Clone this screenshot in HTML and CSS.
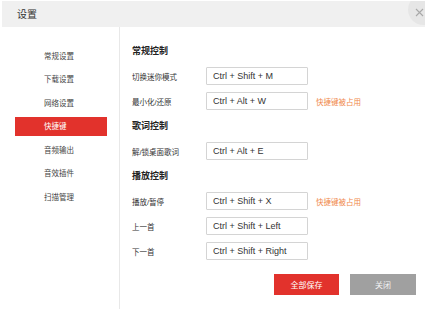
FILE: index.html
```html
<!DOCTYPE html>
<html lang="zh-CN">
<head>
    <meta charset="UTF-8">
    <meta name="viewport" content="width=device-width, initial-scale=1.0">
    <title>设置</title>
    <link rel="stylesheet" href="styles.css">
</head>
<body>

<div class="dialog">
    <div class="titlebar">
        <span class="title">设置</span>
        <div class="close">
            <svg width="9" height="9" viewBox="0 0 9 9"><path d="M1 1 L8 8 M8 1 L1 8" stroke="#a8a8a8" stroke-width="1.1" fill="none"/></svg>
        </div>
    </div>

    <div class="content">
        <ul class="sidebar">
            <li>常规设置</li>
            <li>下载设置</li>
            <li>网络设置</li>
            <li class="active">快捷键</li>
            <li>音频输出</li>
            <li>音效插件</li>
            <li>扫描管理</li>
        </ul>

        <div class="main">
            <div class="section">
                <h3>常规控制</h3>
                <div class="row">
                    <label>切换迷你模式</label>
                    <div class="key">Ctrl + Shift + M</div>
                </div>
                <div class="row">
                    <label>最小化/还原</label>
                    <div class="key">Ctrl + Alt + W</div>
                    <span class="warn">快捷键被占用</span>
                </div>
            </div>

            <div class="section">
                <h3>歌词控制</h3>
                <div class="row">
                    <label>解/锁桌面歌词</label>
                    <div class="key">Ctrl + Alt + E</div>
                </div>
            </div>

            <div class="section">
                <h3>播放控制</h3>
                <div class="row">
                    <label>播放/暂停</label>
                    <div class="key">Ctrl + Shift + X</div>
                    <span class="warn">快捷键被占用</span>
                </div>
                <div class="row">
                    <label>上一首</label>
                    <div class="key">Ctrl + Shift + Left</div>
                </div>
                <div class="row">
                    <label>下一首</label>
                    <div class="key">Ctrl + Shift + Right</div>
                </div>
            </div>

            <div class="buttons">
                <button class="btn-save">全部保存</button>
                <button class="btn-close">关闭</button>
            </div>
        </div>
    </div>
</div>

</body>
</html>
```

FILE: styles.css
```css
body {
    font-family: "Liberation Sans", "Noto Sans CJK SC", sans-serif;
    background-color: #fff;
    color: #333;
    margin: 0;
    padding: 0;
}

.dialog {
    width: 423px;
    margin-left: 2px;
    padding-top: 1px;
}

.titlebar {
    position: relative;
    height: 26px;
    background-color: #f0f0f0;
    padding-left: 15px;
    overflow: hidden;
}

.title {
    font-size: 10px;
    line-height: 28px;
    color: #333;
}

.close {
    position: absolute;
    right: -14px;
    top: -7px;
    width: 31px;
    height: 31px;
    border-radius: 50%;
    background-color: #e6e6e6;
}

.close svg {
    position: absolute;
    left: 7px;
    top: 14px;
}

.content {
    display: flex;
    height: 282px;
}

.sidebar {
    list-style-type: none;
    margin: 0;
    padding: 19.5px 12px 0 13px;
    width: 92px;
    border-right: 1px solid #e8e8e8;
    display: flex;
    flex-direction: column;
    gap: 4.5px;
}

.sidebar li {
    height: 19px;
    line-height: 19px;
    padding-left: 29px;
    font-size: 7.5px;
    color: #444;
}

.sidebar li.active {
    background-color: #e2322c;
    color: #fff;
}

.main {
    flex: 1;
    padding: 17px 9px 0 12px;
}

.section {
    margin-bottom: 9px;
}

.section h3 {
    margin: 0 0 7px 0;
    height: 16px;
    line-height: 14px;
    font-size: 9px;
    font-weight: bold;
    color: #222;
}

.row {
    display: flex;
    align-items: center;
    height: 18px;
    margin-bottom: 7px;
}

.row:last-child {
    margin-bottom: 0;
}

.row label {
    width: 74px;
    font-size: 7.5px;
    color: #333;
}

.key {
    box-sizing: border-box;
    width: 102px;
    height: 18px;
    line-height: 17px;
    border: 1px solid #d4d4d4;
    border-radius: 1px;
    padding-left: 6px;
    font-size: 9px;
    color: #333;
}

.warn {
    margin-left: 8px;
    font-size: 7.5px;
    color: #f0884a;
}

.buttons {
    display: flex;
    justify-content: flex-end;
    gap: 11px;
    margin-top: 14px;
}

.buttons button {
    box-sizing: border-box;
    height: 21px;
    border: none;
    font-family: inherit;
    font-size: 8px;
    cursor: pointer;
}

.btn-save {
    width: 65px;
    background-color: #e2322c;
    border: 1px solid #d42620;
    color: #fff;
}

.btn-close {
    width: 66px;
    background-color: #a0a0a0;
    color: #f2f2f2;
}
```
